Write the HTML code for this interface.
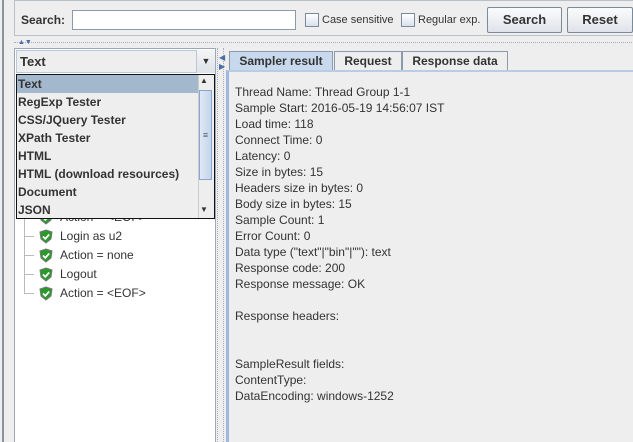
<!DOCTYPE html><html style="overflow:hidden;height:442px"><head><style>
body{margin:0;width:633px;height:442px;background:#eeeeee;position:relative;overflow:hidden;font-family:"Liberation Sans",sans-serif;font-size:12px;color:#333}
.a{position:absolute}
.b{font-weight:bold;color:#333}
.cb{position:absolute;width:12px;height:12px;border:1px solid #7a8a99;background:linear-gradient(#fff,#d8e2ee)}
.btn{position:absolute;border:1px solid #7a8a99;background:linear-gradient(#fbfbfb,#dfe4ea);font-weight:bold;font-size:13px;text-align:center;line-height:23px;color:#333;border-radius:2px}
.li{position:absolute;left:18px;font-weight:bold;font-size:12px;height:18px;line-height:18px;color:#333}
.tx{position:absolute;left:235px;font-size:12px;line-height:16px;color:#333}
.tab{position:absolute;top:51px;height:19px;border:1px solid #8a9aab;border-bottom:none;font-weight:bold;font-size:12px;line-height:19px;text-align:center;background:#eeeeee}
.tr{position:absolute;left:24px;height:19px;line-height:19px;font-size:12px}
.tr svg{position:absolute;left:15px;top:2px}
.tr span{position:absolute;left:36px;white-space:nowrap}
.tr i{position:absolute;left:0;top:9px;width:10px;border-top:1px solid #bbb}
</style></head><body>
<div class="a" style="left:2px;top:0;width:2px;height:442px;background:#8a949c"></div>
<div class="a" style="left:14px;top:0;width:618px;height:34px;border-left:1px solid #b8c0c8;border-bottom:1px solid #b8c0c8;border-top:1px solid #b8c0c8"></div>
<div class="a b" style="left:21px;top:13px;font-size:12px">Search:</div>
<div class="a" style="left:72px;top:10px;width:222px;height:18px;border:1px solid #8a9aab;background:#fff"></div>
<div class="cb" style="left:305px;top:13px"></div><div class="a" style="left:322px;top:14px;font-size:11px">Case sensitive</div>
<div class="cb" style="left:401px;top:13px"></div><div class="a" style="left:418px;top:14px;font-size:11px">Regular exp.</div>
<div class="btn" style="left:487px;top:7px;width:73px;height:24px">Search</div>
<div class="btn" style="left:567px;top:7px;width:64px;height:24px">Reset</div>
<div class="a" style="left:14px;top:42px;width:618px;border-top:1px dotted #aab"></div>
<div class="a" style="left:18px;top:39px;font-size:7px;color:#4a6ea8">▲▼</div>
<div class="a" style="left:14px;top:48px;width:200px;height:394px;border:1px solid #9aa8b8;border-bottom:none;background:#fff;box-sizing:border-box;width:202px"></div>
<div class="a" style="left:16px;top:50px;border:1px solid #b8c8d8;background:#eeeeee;line-height:22px;font-weight:bold;font-size:13px;color:#333;padding-left:3px;box-sizing:border-box;width:181px;height:23px">Text</div>
<div class="a" style="left:197px;top:50px;width:18px;height:23px;background:linear-gradient(#f4f4f4,#dde3ea);text-align:center;font-size:9px;line-height:23px">▼</div>
<div class="tr" style="top:208px"><i></i><svg width="14" height="15" viewBox="0 0 14 15"><path d="M7 1 L13 3 L12 10 L7 14 L2 10 L1 3 Z" fill="#2a9a2a" stroke="#777" stroke-width="1"/><path d="M4 7.5 L6.3 9.8 L10.2 5.5" fill="none" stroke="#fff" stroke-width="1.8"/></svg><span>Action = &lt;EOF&gt;</span></div>
<div class="a" style="left:16px;top:74px;height:145px;border:1px solid #111;background:#eeeeee;box-sizing:border-box;width:199px"></div>
<div class="a" style="left:17px;top:75px;width:181px;height:18px;background:#a3b8cc"></div>
<div class="li" style="top:75px">Text</div><div class="li" style="top:93px">RegExp Tester</div><div class="li" style="top:111px">CSS/JQuery Tester</div><div class="li" style="top:129px">XPath Tester</div><div class="li" style="top:147px">HTML</div><div class="li" style="top:165px">HTML (download resources)</div><div class="li" style="top:183px">Document</div><div class="li" style="top:201px">JSON</div>
<div class="a" style="left:198px;top:75px;width:15px;height:143px;background:#eeeeee;border-left:1px solid #ccc"></div>
<div class="a" style="left:199px;top:90px;width:13px;height:90px;border:1px solid #8aa6d0;background:linear-gradient(90deg,#dfe8f4,#c5d5ea);box-sizing:border-box;font-size:9px;text-align:center;line-height:88px;color:#557">≡</div>
<div class="a" style="left:200px;top:76px;font-size:8px">▲</div><div class="a" style="left:200px;top:205px;font-size:8px">▼</div>
<div class="a" style="left:24px;top:219px;width:1px;height:75px;background:#bbb"></div>
<div class="tr" style="top:227px"><i></i><svg width="14" height="15" viewBox="0 0 14 15"><path d="M7 1 L13 3 L12 10 L7 14 L2 10 L1 3 Z" fill="#2a9a2a" stroke="#777" stroke-width="1"/><path d="M4 7.5 L6.3 9.8 L10.2 5.5" fill="none" stroke="#fff" stroke-width="1.8"/></svg><span>Login as u2</span></div>
<div class="tr" style="top:246px"><i></i><svg width="14" height="15" viewBox="0 0 14 15"><path d="M7 1 L13 3 L12 10 L7 14 L2 10 L1 3 Z" fill="#2a9a2a" stroke="#777" stroke-width="1"/><path d="M4 7.5 L6.3 9.8 L10.2 5.5" fill="none" stroke="#fff" stroke-width="1.8"/></svg><span>Action = none</span></div>
<div class="tr" style="top:265px"><i></i><svg width="14" height="15" viewBox="0 0 14 15"><path d="M7 1 L13 3 L12 10 L7 14 L2 10 L1 3 Z" fill="#2a9a2a" stroke="#777" stroke-width="1"/><path d="M4 7.5 L6.3 9.8 L10.2 5.5" fill="none" stroke="#fff" stroke-width="1.8"/></svg><span>Logout</span></div>
<div class="tr" style="top:284px"><i></i><svg width="14" height="15" viewBox="0 0 14 15"><path d="M7 1 L13 3 L12 10 L7 14 L2 10 L1 3 Z" fill="#2a9a2a" stroke="#777" stroke-width="1"/><path d="M4 7.5 L6.3 9.8 L10.2 5.5" fill="none" stroke="#fff" stroke-width="1.8"/></svg><span>Action = &lt;EOF&gt;</span></div>
<div class="a" style="left:217px;top:48px;height:394px;border-left:1px dotted #aab"></div>
<div class="a" style="left:223px;top:48px;height:394px;border-left:1px dotted #aab"></div>
<div class="a" style="left:219px;top:53px;font-size:8px;color:#4a6ea8">◀<br>▶</div>
<div class="tab" style="left:229px;width:102px;background:#c8d9ee">Sampler result</div>
<div class="tab" style="left:334px;width:66px">Request</div>
<div class="tab" style="left:402px;width:104px">Response data</div>
<div class="a" style="left:226px;top:70px;width:407px;height:372px;border-top:2px solid #b8cce4;border-left:3px solid #9db8dc;box-sizing:border-box"></div>
<div class="tx" style="top:84px">Thread Name: Thread Group 1-1<br>Sample Start: 2016-05-19 14:56:07 IST<br>Load time: 118<br>Connect Time: 0<br>Latency: 0<br>Size in bytes: 15<br>Headers size in bytes: 0<br>Body size in bytes: 15<br>Sample Count: 1<br>Error Count: 0<br>Data type ("text"|"bin"|""): text<br>Response code: 200<br>Response message: OK<br><br>Response headers:<br><br><br>SampleResult fields:<br>ContentType: <br>DataEncoding: windows-1252</div>
</body></html>
